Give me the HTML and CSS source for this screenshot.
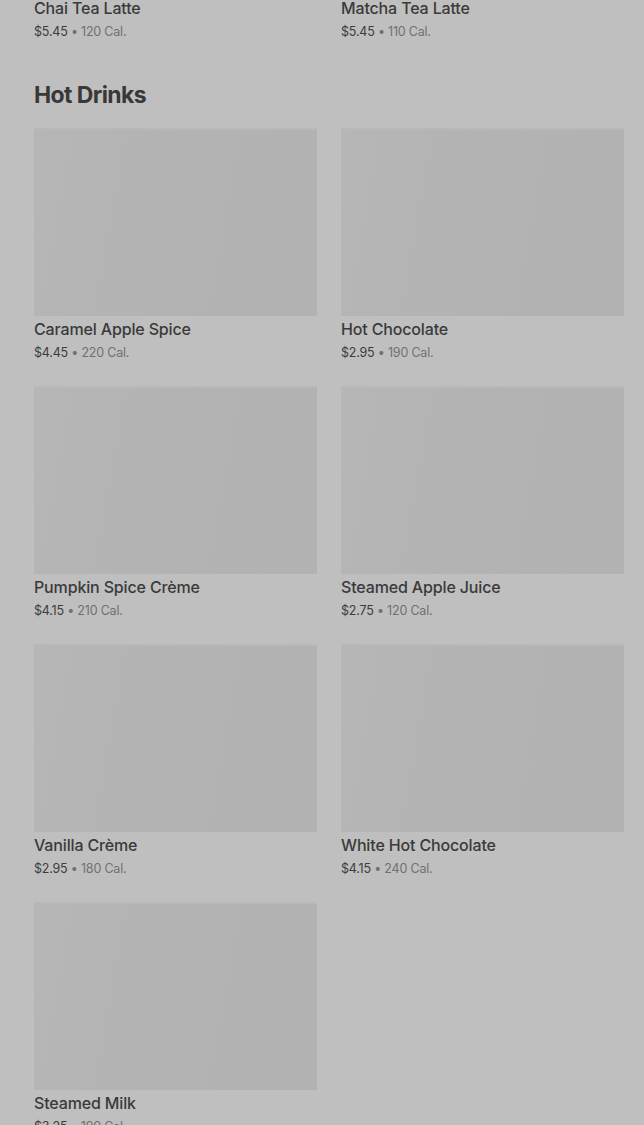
FILE: index.html
```html
<!DOCTYPE html>
<html lang="en">
<head>
<meta charset="utf-8">
<title>Menu</title>
<link rel="stylesheet" href="styles.css">
</head>
<body>
<main class="menu">
  <section class="section section-prev">
    <div class="grid">
      <div class="card">
        <div class="thumb"></div>
        <div class="name">Chai Tea Latte</div>
        <div class="meta"><span class="price">$5.45</span> • 120 Cal.</div>
      </div>
      <div class="card">
        <div class="thumb"></div>
        <div class="name">Matcha Tea Latte</div>
        <div class="meta"><span class="price">$5.45</span> • 110 Cal.</div>
      </div>
    </div>
  </section>
  <section class="section">
    <h2 class="heading">Hot Drinks</h2>
    <div class="grid">
      <div class="card">
        <div class="thumb"></div>
        <div class="name">Caramel Apple Spice</div>
        <div class="meta"><span class="price">$4.45</span> • 220 Cal.</div>
      </div>
      <div class="card">
        <div class="thumb"></div>
        <div class="name">Hot Chocolate</div>
        <div class="meta"><span class="price">$2.95</span> • 190 Cal.</div>
      </div>
      <div class="card">
        <div class="thumb"></div>
        <div class="name">Pumpkin Spice Crème</div>
        <div class="meta"><span class="price">$4.15</span> • 210 Cal.</div>
      </div>
      <div class="card">
        <div class="thumb"></div>
        <div class="name">Steamed Apple Juice</div>
        <div class="meta"><span class="price">$2.75</span> • 120 Cal.</div>
      </div>
      <div class="card">
        <div class="thumb"></div>
        <div class="name">Vanilla Crème</div>
        <div class="meta"><span class="price">$2.95</span> • 180 Cal.</div>
      </div>
      <div class="card">
        <div class="thumb"></div>
        <div class="name">White Hot Chocolate</div>
        <div class="meta"><span class="price">$4.15</span> • 240 Cal.</div>
      </div>
      <div class="card">
        <div class="thumb"></div>
        <div class="name">Steamed Milk</div>
        <div class="meta"><span class="price">$3.25</span> • 190 Cal.</div>
      </div>
    </div>
  </section>
</main>
</body>
</html>
```

FILE: styles.css
```css
html, body {
  margin: 0;
  padding: 0;
  background: #bfbfbf;
  overflow: hidden;
}

body {
  font-family: Inter, "Liberation Sans", sans-serif;
  color: #3a3a3a;
}

.menu {
  margin-top: -193px;
  padding: 0 20px 40px 34px;
}

.section-prev {
  margin-bottom: 37px;
}

.heading {
  margin: 0 0 17px;
  font-size: 23px;
  line-height: 32px;
  font-weight: 700;
  letter-spacing: -0.6px;
  color: #383838;
}

.grid {
  display: grid;
  grid-template-columns: 283px 283px;
  column-gap: 24px;
  row-gap: 23px;
}

.thumb {
  height: 188px;
  background: linear-gradient(100deg, #b6b6b6 0%, #b3b3b3 40%, #b2b2b2 100%);
  border-top: 2px solid #b8b8b8;
  box-sizing: border-box;
}

.name {
  margin-top: 2px;
  font-size: 16px;
  line-height: 22px;
  font-weight: 500;
  color: #3a3a3a;
  letter-spacing: -0.15px;
}

.meta {
  margin-top: 3px;
  font-size: 12.5px;
  line-height: 20px;
  color: #707070;
  letter-spacing: -0.2px;
}

.price {
  color: #3c3c3c;
}
```
